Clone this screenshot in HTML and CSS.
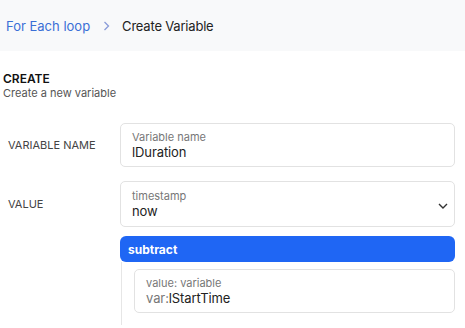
FILE: index.html
```html
<!DOCTYPE html>
<html lang="en">
  <head>
    <meta charset="UTF-8">
    <meta name="viewport" content="width=device-width, initial-scale=1.0">
    <title>Create Variable</title>
    <link rel="stylesheet" href="styles.css">
  </head>
  <body>
    <header class="crumbs">
      <a href="#" class="crumb-link">For Each loop</a>
      <svg class="crumb-sep" width="7" height="10" viewBox="0 0 7 10"><path d="M1.5 1 L5.5 5 L1.5 9" fill="none" stroke="currentColor" stroke-width="1.3"/></svg>
      <span class="crumb-current">Create Variable</span>
    </header>
    <section class="intro">
      <h2>CREATE</h2>
      <p>Create a new variable</p>
    </section>
    <form class="form">
      <div class="row">
        <label class="row-label">VARIABLE NAME</label>
        <div class="field">
          <span class="field-label">Variable name</span>
          <span class="field-value">lDuration</span>
        </div>
      </div>
      <div class="row">
        <label class="row-label tall">VALUE</label>
        <div class="value-col">
          <div class="field select">
            <div>
              <span class="field-label">timestamp</span>
              <span class="field-value">now</span>
            </div>
            <svg class="caret" width="10" height="6" viewBox="0 0 10 6"><path d="M1 1 L5 5 L9 1" fill="none" stroke="#333" stroke-width="1.4"/></svg>
          </div>
          <div class="op-bar">subtract</div>
          <div class="nested">
            <div class="field">
              <span class="field-label">value: variable</span>
              <span class="field-value"><span class="prefix">var:</span>lStartTime</span>
            </div>
          </div>
        </div>
      </div>
    </form>
  </body>
</html>
```

FILE: styles.css
```css
body { margin: 0; font-family: Inter, "Noto Sans", sans-serif; background: #fff; color: #222; }
.crumbs { height: 51px; background: #f8f9fa; display: flex; align-items: center; padding-left: 6px; font-size: 13px; }
.crumb-link { color: #3a6fd6; text-decoration: none; }
.crumb-sep { color: #8a9bd8; margin: 0 12px 0 13px; }
.crumb-current { color: #222; letter-spacing: -0.2px; }
.intro { padding: 20px 3px 0; }
.intro h2 { margin: 0; font-size: 12px; line-height: 15px; font-weight: 600; color: #111; }
.intro p { margin: 0; font-size: 11px; line-height: 14px; color: #555; }
.form { padding: 23px 10px 0 8px; display: flex; flex-direction: column; gap: 14px; }
.row { display: grid; grid-template-columns: 112px 1fr; align-items: center; }
.row-label { font-size: 11px; color: #444; }
.row-label.tall { align-self: start; height: 46px; display: flex; align-items: center; }
.field { border: 1px solid #e2e2e2; border-radius: 5px; padding: 7px 11px 5px; display: flex; flex-direction: column; }
.field-label { display: block; font-size: 11px; line-height: 13px; color: #777; }
.field-value { display: block; font-size: 13px; line-height: 17px; color: #222; letter-spacing: -0.1px; }
.select { flex-direction: row; align-items: center; justify-content: space-between; padding: 8px 6px 6px 11px; }
.caret { margin-top: 2px; }
.value-col { display: flex; flex-direction: column; }
.op-bar { margin-top: 9px; height: 26px; background: #1f66f4; border-radius: 6px; color: #fff; font-size: 12px; font-weight: 700; display: flex; align-items: center; padding-left: 8px; }
.nested { border-left: 1px solid #e6e6e6; margin-left: 1px; padding: 7px 0 12px 12px; }
.prefix { color: #777; }
```
